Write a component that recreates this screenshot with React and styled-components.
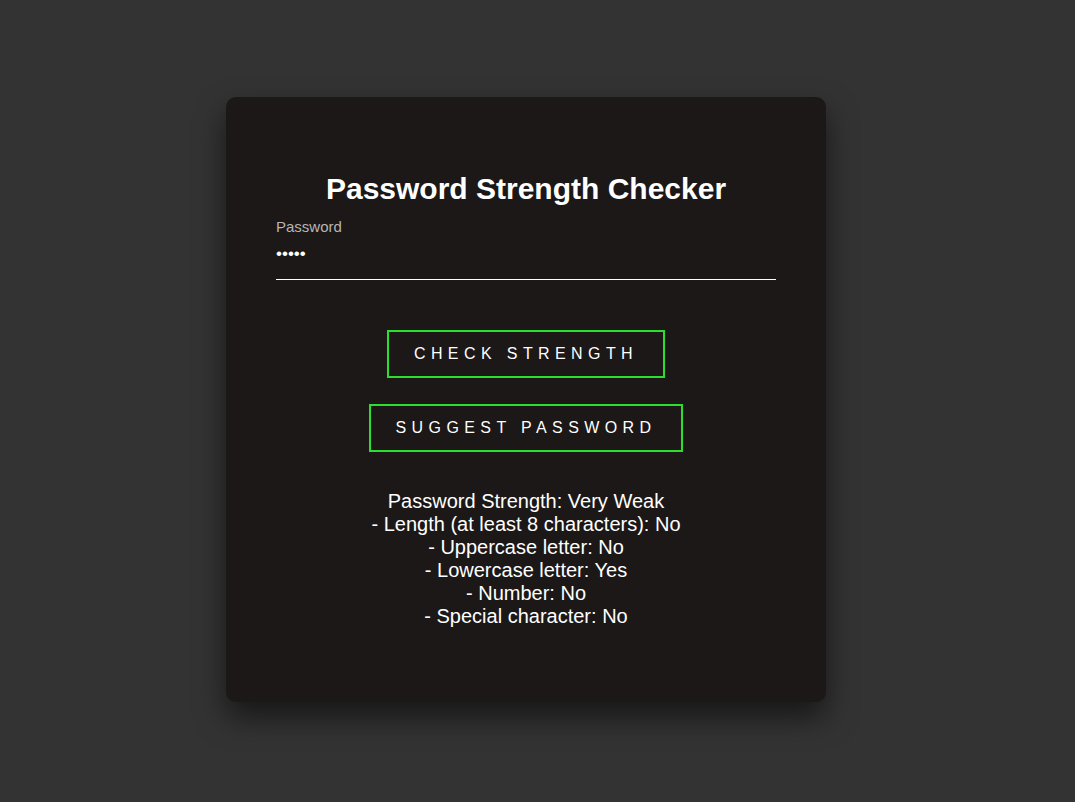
import React, { useState } from "react";
import styled, { createGlobalStyle } from "styled-components";

const Global = createGlobalStyle`
  html, body { margin: 0; padding: 0; }
  body {
    background: #333333;
    font-family: "Liberation Sans", Arial, sans-serif;
  }
`;

const Page = styled.div`
  min-height: 802px;
  display: flex;
  align-items: center;
  justify-content: center;
  padding-right: 23px;
  box-sizing: border-box;
`;

const Card = styled.div`
  width: 600px;
  height: 605px;
  box-sizing: border-box;
  background: #1b1817;
  border-radius: 10px;
  padding: 75px 50px 0;
  box-shadow: 0 15px 30px rgba(0, 0, 0, 0.55);
  display: flex;
  flex-direction: column;
  align-items: center;
  margin-top: -3px;
`;

const Title = styled.h2`
  margin: 0;
  font-size: 30px;
  line-height: 34px;
  font-weight: 700;
  color: #ffffff;
  text-align: center;
`;

const Field = styled.div`
  align-self: stretch;
  margin-top: 12px;
  display: flex;
  flex-direction: column;
`;

const Label = styled.label`
  font-size: 15px;
  line-height: 17px;
  color: #b8b5b4;
`;

const Input = styled.input`
  margin-top: 4px;
  background: transparent;
  border: none;
  border-bottom: 1px solid #ffffff;
  outline: none;
  color: #ffffff;
  font-family: "Liberation Sans", Arial, sans-serif;
  font-size: 17px;
  line-height: 18px;
  height: 18px;
  padding: 6px 0 16px;
  box-sizing: content-box;
`;

const Actions = styled.div`
  margin-top: 50px;
  display: flex;
  flex-direction: column;
  align-items: center;
  gap: 26px;
`;

const Button = styled.button`
  height: 48px;
  box-sizing: border-box;
  background: transparent;
  border: 2px solid #2ede2e;
  color: #ffffff;
  font-family: "Liberation Sans", Arial, sans-serif;
  font-size: 16px;
  letter-spacing: 5.4px;
  text-transform: uppercase;
  padding: 0 25px;
  cursor: pointer;
`;

const Result = styled.div`
  margin-top: 38px;
  color: #ffffff;
  font-size: 20px;
  line-height: 23px;
  text-align: center;
`;

export default function App() {
  const [pw, setPw] = useState("abcde");
  const lines = [
    "Password Strength: Very Weak",
    "- Length (at least 8 characters): No",
    "- Uppercase letter: No",
    "- Lowercase letter: Yes",
    "- Number: No",
    "- Special character: No",
  ];
  return (
    <>
      <Global />
      <Page>
        <Card>
          <Title>Password Strength Checker</Title>
          <Field>
            <Label htmlFor="pw">Password</Label>
            <Input
              id="pw"
              type="password"
              value={pw}
              onChange={(e) => setPw(e.target.value)}
            />
          </Field>
          <Actions>
            <Button>Check Strength</Button>
            <Button>Suggest Password</Button>
          </Actions>
          <Result>
            {lines.map((l) => (
              <div key={l}>{l}</div>
            ))}
          </Result>
        </Card>
      </Page>
    </>
  );
}
